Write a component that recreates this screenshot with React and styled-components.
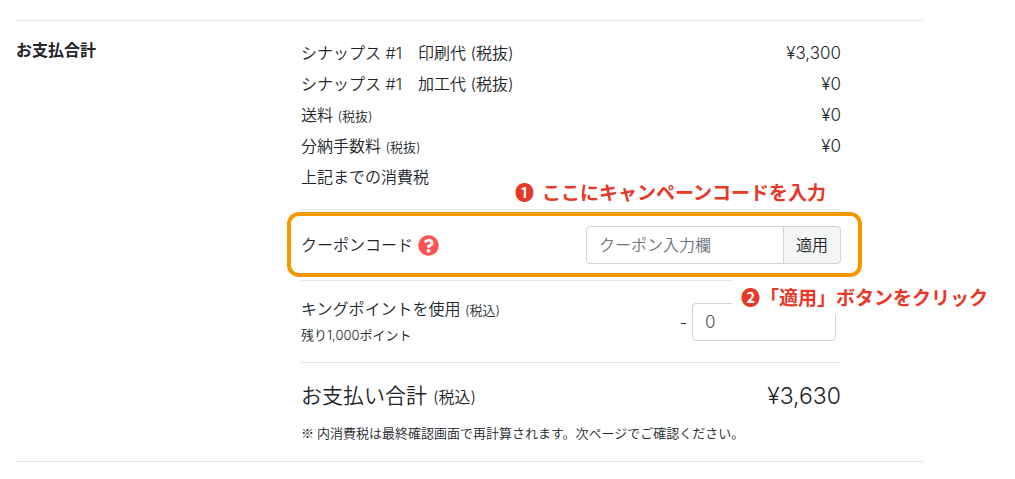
import React from 'react';
import styled, { createGlobalStyle } from 'styled-components';
import { FaQuestionCircle } from 'react-icons/fa';

const GlobalStyle = createGlobalStyle`
  *, *::before, *::after {
    box-sizing: border-box;
  }

  body {
    margin: 0;
    background-color: #fff;
    color: #212529;
    font-family: Inter, "Noto Sans CJK JP", sans-serif;
    font-size: 16px;
    font-weight: 350;
    line-height: 24px;
  }

  button, input {
    font: inherit;
    color: inherit;
  }
`;

const Page = styled.main`
  padding: 20px 92px 16px 16px;
`;

const Payment = styled.section`
  display: grid;
  grid-template-columns: 285px minmax(0, 1fr);
  padding: 16px 82px 18px 0;
  border-top: 1px solid #e5e5e5;
  border-bottom: 1px solid #e5e5e5;
`;

const Heading = styled.h2`
  margin: 0;
  font-size: 16px;
  font-weight: bold;
  line-height: 26px;
`;

const PriceTable = styled.table`
  width: 100%;
  margin-bottom: 17px;
  border-collapse: collapse;
`;

const PriceLabel = styled.th`
  height: 31px;
  padding: 0;
  font-weight: inherit;
  text-align: left;
`;

const Price = styled.td`
  padding: 0;
  font-size: 17px;
  text-align: right;
`;

const Small = styled.small`
  font-size: ${({ $size }) => $size || 13}px;
  line-height: 1;
`;

const Block = styled.div`
  position: relative;
  display: flex;
  align-items: center;
  justify-content: space-between;
  padding: ${({ $padding }) => $padding || '16px 0'};
  border-top: 1px solid #e5e5e5;
`;

const CouponLabel = styled.div`
  display: flex;
  align-items: center;
  gap: 5px;
`;

const HelpButton = styled.button`
  display: flex;
  padding: 0;
  border: 0;
  background: none;
  color: #ff5252;
  font-size: 21px;
`;

const InputGroup = styled.div`
  display: flex;
  width: 255px;
`;

const TextInput = styled.input`
  width: 144px;
  height: 38px;
  padding: 6px 12px;
  border: 1px solid #ced4da;
  border-radius: 4px;
  background-color: #fff;
  color: #495057;

  &::placeholder {
    color: #6c757d;
    opacity: 1;
  }
`;

const CouponInput = styled(TextInput)`
  flex: 1;
  min-width: 0;
  border-radius: 4px 0 0 4px;
`;

const PointInput = styled(TextInput)`
  font-size: 17px;
`;

const ApplyButton = styled.button`
  flex: none;
  height: 38px;
  margin-left: -1px;
  padding: 6px 12px;
  border: 1px solid #ced4da;
  border-radius: 0 4px 4px 0;
  background-color: #f4f5f5;
  color: #212529;
`;

const PointLabel = styled.label`
  line-height: 25px;
`;

const PointField = styled.div`
  display: flex;
  align-items: center;
  gap: 5px;
  padding-right: 5px;
`;

const TotalPrice = styled.div`
  font-size: ${({ $size }) => $size || 21}px;
  line-height: 34px;
`;

const Note = styled.p`
  margin: 0;
  font-family: "Noto Sans CJK JP", sans-serif;
  font-size: 13px;
  line-height: 20px;
`;

const Frame = styled.div`
  position: absolute;
  inset: 2px -21px 3px -14px;
  border: 4px solid #f39800;
  border-radius: 12px;
  pointer-events: none;
`;

const Guide = styled.strong`
  position: absolute;
  display: flex;
  color: #e83828;
  font-size: 19px;
  font-weight: bold;
  font-family: "Noto Sans CJK JP", sans-serif;
  white-space: nowrap;
`;

const GuideInput = styled(Guide)`
  gap: 8px;
  top: -32px;
  right: 15px;
  line-height: 28px;
`;

const GuideApply = styled(Guide)`
  top: -3px;
  right: -147px;
  padding-left: 9px;
  background-color: #fff;
  line-height: 37px;
`;

const PRICES = [
  { label: 'シナップス #1　印刷代 (税抜)', price: '¥3,300' },
  { label: 'シナップス #1　加工代 (税抜)', price: '¥0' },
  { label: '送料', tax: '(税抜)', price: '¥0' },
  { label: '分納手数料', tax: '(税抜)', price: '¥0' },
  { label: '上記までの消費税', price: '' },
];

export default function App() {
  return (
    <Page lang="ja">
      <GlobalStyle />
      <Payment>
        <Heading>お支払合計</Heading>
        <div>
          <PriceTable>
            <tbody>
              {PRICES.map(({ label, tax, price }) => (
                <tr key={label}>
                  <PriceLabel scope="row">
                    {label} {tax && <Small>{tax}</Small>}
                  </PriceLabel>
                  <Price>{price}</Price>
                </tr>
              ))}
            </tbody>
          </PriceTable>

          <Block>
            <CouponLabel>
              <label htmlFor="coupon">クーポンコード</label>
              <HelpButton type="button" aria-label="クーポンコードについて">
                <FaQuestionCircle />
              </HelpButton>
            </CouponLabel>
            <InputGroup>
              <CouponInput id="coupon" type="text" placeholder="クーポン入力欄" />
              <ApplyButton type="button">適用</ApplyButton>
            </InputGroup>
            <Frame />
            <GuideInput>
              <span>❶</span>
              <span>ここにキャンペーンコードを入力</span>
            </GuideInput>
          </Block>

          <Block $padding="16px 0 15px">
            <PointLabel htmlFor="point">
              キングポイントを使用 <Small>(税込)</Small>
              <br />
              <Small>残り1,000ポイント</Small>
            </PointLabel>
            <PointField>
              <span>-</span>
              <PointInput id="point" type="text" defaultValue="0" />
            </PointField>
            <GuideApply>❷「適用」ボタンをクリック</GuideApply>
          </Block>

          <Block $padding="16px 0 10px">
            <TotalPrice>
              お支払い合計 <Small $size={16}>(税込)</Small>
            </TotalPrice>
            <TotalPrice $size={23}>¥3,630</TotalPrice>
          </Block>
          <Note>※ 内消費税は最終確認画面で再計算されます。次ページでご確認ください。</Note>
        </div>
      </Payment>
    </Page>
  );
}
